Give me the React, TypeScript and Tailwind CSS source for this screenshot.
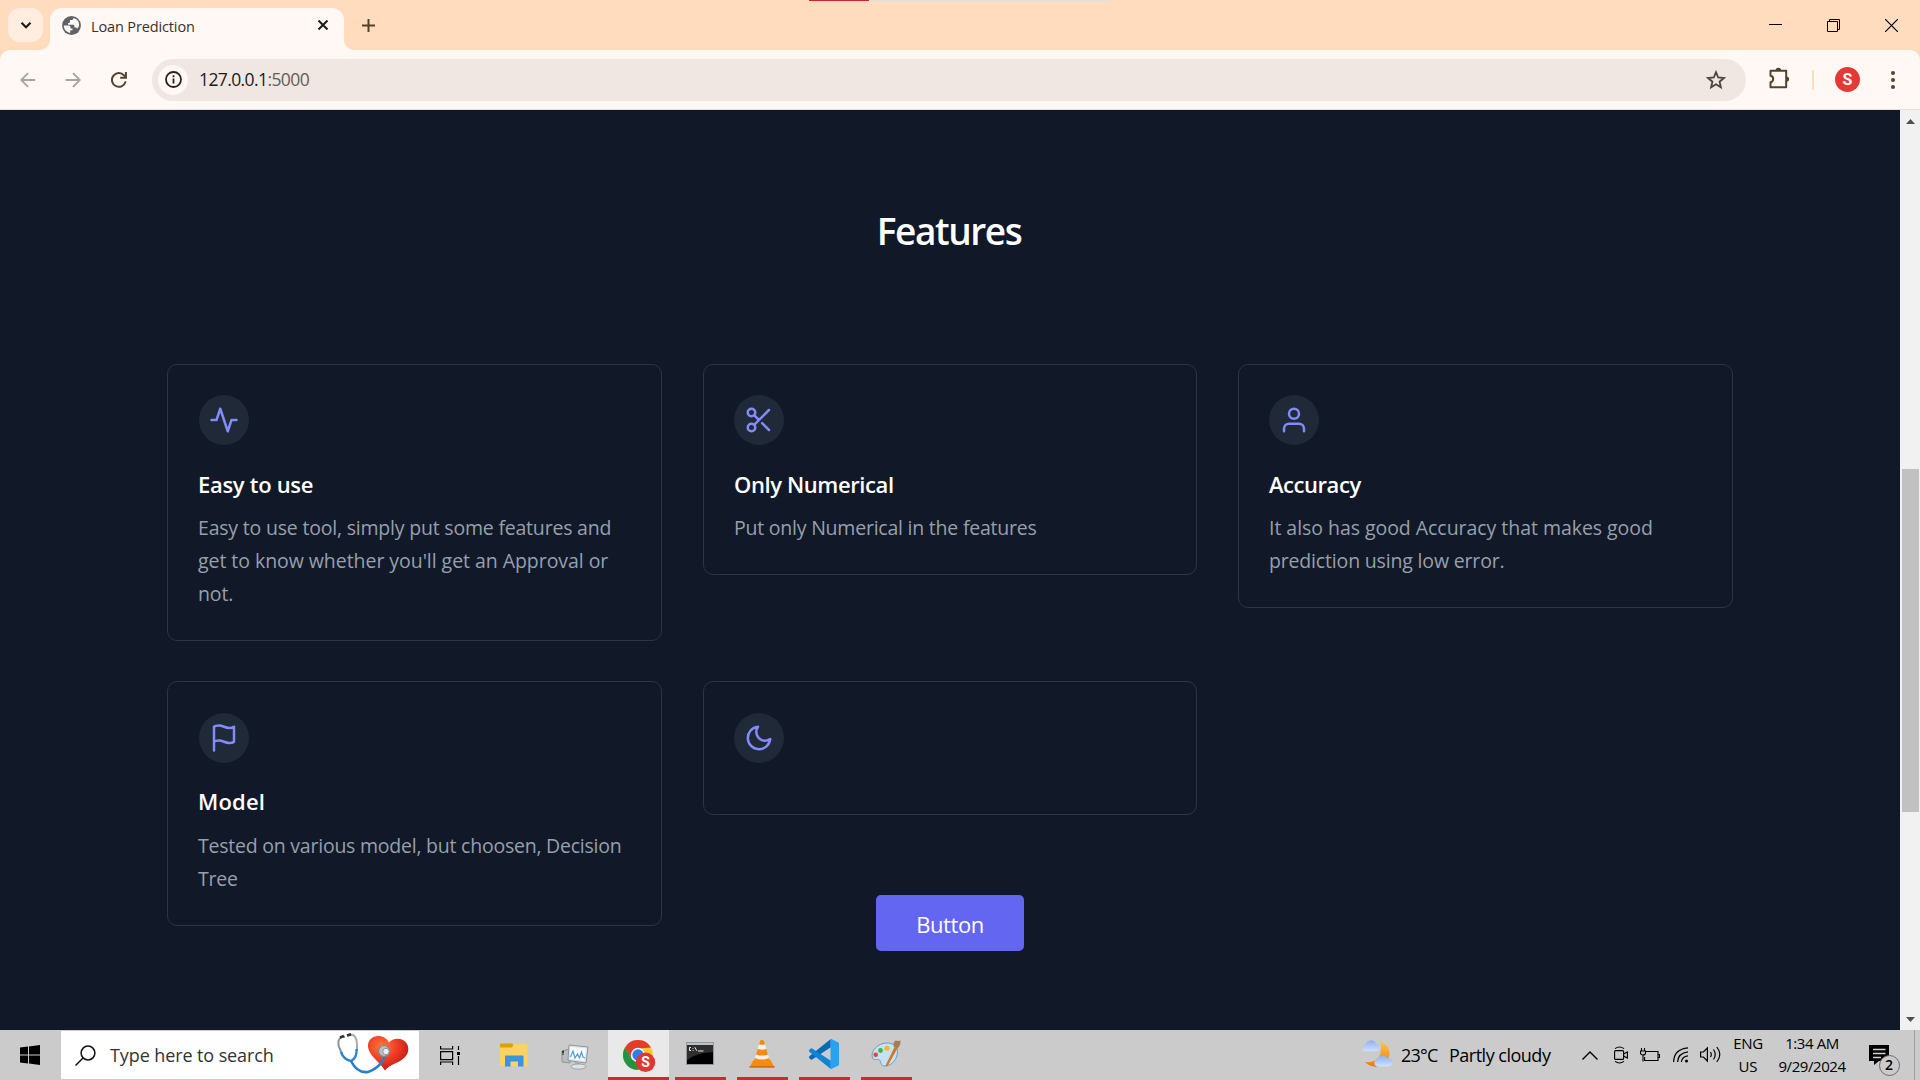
import type { ReactNode } from "react";

type Line = { text: string; tracking: string };
type Feature = {
  icon: ReactNode;
  title?: Line;
  lines?: Line[];
};

const features: Feature[] = [
  {
    icon: <path d="M22 12h-4l-3 9L9 3l-3 9H2" />,
    title: { text: "Easy to use", tracking: "tracking-[-0.3px]" },
    lines: [
      { text: "Easy to use tool, simply put some features and", tracking: "tracking-[-0.201px]" },
      { text: "get to know whether you'll get an Approval or", tracking: "tracking-[-0.05px]" },
      { text: "not.", tracking: "tracking-[-0.1px]" },
    ],
  },
  {
    icon: (
      <>
        <circle cx="6" cy="6" r="3" />
        <circle cx="6" cy="18" r="3" />
        <path d="M20 4L8.12 15.88M14.47 14.48L20 20M8.12 8.12L12 12" />
      </>
    ),
    title: { text: "Only Numerical", tracking: "tracking-[-0.4px]" },
    lines: [{ text: "Put only Numerical in the features", tracking: "tracking-[-0.224px]" }],
  },
  {
    icon: (
      <>
        <path d="M20 21v-2a4 4 0 00-4-4H8a4 4 0 00-4 4v2" />
        <circle cx="12" cy="7" r="4" />
      </>
    ),
    title: { text: "Accuracy", tracking: "tracking-[-0.45px]" },
    lines: [
      { text: "It also has good Accuracy that makes good", tracking: "tracking-[-0.043px]" },
      { text: "prediction using low error.", tracking: "tracking-[-0.168px]" },
    ],
  },
  {
    icon: <path d="M4 15s1-1 4-1 5 2 8 2 4-1 4-1V3s-1 1-4 1-5-2-8-2-4 1-4 1zM4 22v-7" />,
    title: { text: "Model", tracking: "tracking-[0.2px]" },
    lines: [
      { text: "Tested on various model, but choosen, Decision", tracking: "tracking-[-0.23px]" },
      { text: "Tree", tracking: "tracking-[-0.2px]" },
    ],
  },
  { icon: <path d="M21 12.79A9 9 0 1111.21 3 7 7 0 0021 12.79z" /> },
];

function FeatureCard({ feature, index }: { feature: Feature; index: number }) {
  const lowered = index > 2;
  const firstColumn = index % 3 === 0;
  return (
    <div
      className={`rounded-[10px] border border-[#2b3643] ${firstColumn ? "px-[31px]" : "px-[30px]"} ${
        lowered ? "pt-[31px]" : "pt-[30px]"
      } ${feature.title ? "pb-[30px]" : "pb-[51px]"}`}
    >
      <div className="flex size-[50px] items-center justify-center rounded-full bg-[#1f2937]">
        <svg
          className="size-[30px] text-[#818cf8]"
          viewBox="0 0 24 24"
          fill="none"
          stroke="currentColor"
          strokeWidth="2"
          strokeLinecap="round"
          strokeLinejoin="round"
        >
          {feature.icon}
        </svg>
      </div>
      {feature.title && (
        <h2
          className={`text-[22px] leading-8 font-semibold whitespace-nowrap text-white ${feature.title.tracking} ${
            lowered ? "mt-[22px] mb-3" : "mt-[23px] mb-[11px]"
          } ${firstColumn ? "-ml-px" : "ml-0"}`}
        >
          {feature.title.text}
        </h2>
      )}
      {feature.lines && (
        <p
          className={`text-[19.5px] leading-[33px] whitespace-nowrap text-[#96a0ad] ${
            firstColumn ? "-ml-px" : "ml-0"
          }`}
        >
          {feature.lines.map((l) => (
            <span key={l.text} className={`block ${l.tracking}`}>
              {l.text}
            </span>
          ))}
        </p>
      )}
    </div>
  );
}

function TabStrip() {
  return (
    <div className="relative flex h-[50px] bg-[#fedcbd]">
      <div className="absolute top-0 left-[809px] flex h-px w-[301px] bg-[#dfe0e0]">
        <div className="w-[60px] bg-[#d3222f]" />
      </div>
      <div className="mt-2 ml-2 flex h-[34px] w-[35px] items-center justify-center rounded-xl bg-[#ffeddf]">
        <svg className="size-3" viewBox="0 0 12 12" fill="none" stroke="#1f1b16" strokeWidth="2.2">
          <path d="M1.5 3.8L6 8.2l4.500-4.400" />
        </svg>
      </div>
      <svg className="mt-10 -ml-[3px] size-[10px]" viewBox="0 0 10 10">
        <path d="M0 10A10 10 0 0 0 10 0V10z" fill="#fff8f5" />
      </svg>
      <div className="mt-2 flex h-[42px] w-[294px] items-center rounded-t-xl bg-[#fff8f5] pl-3">
        <svg className="mb-[7px] size-[19px]" viewBox="0 0 19 19">
          <circle cx="9.500" cy="9.500" r="9.400" fill="#5f6368" />
          <path
            d="M1.800 9.600h4.700c1.200 0 2 .9 2 2v.8h2v1.800H8.200v2.700c-3.600-.4-6.400-3.300-6.400-7.300zM11.400 2c-.1 1.500-.6 1.900-1.700 1.900H8v1.900c0 .9-.7 1.200-1.900 1.200v1.800h4.700c1 0 1.600.6 1.600 1.600v1h1c1 0 1.500.4 1.800 1.200 1.200-1 1.900-2.300 1.900-4.100 0-3-2.200-5.700-5.700-6.500z"
            fill="#fff8f5"
          />
        </svg>
        <span className="mb-1 ml-[10px] w-[220px] text-[14.5px] leading-5 tracking-[-0.131px] whitespace-nowrap text-[#38312b]">
          Loan Prediction
        </span>
        <svg className="mb-2 ml-[7px] size-[10px]" viewBox="0 0 10 10" stroke="#1f1b16" strokeWidth="2">
          <path d="M.5.5l9 9M9.500.5l-9 9" />
        </svg>
      </div>
      <svg className="mt-10 size-[10px]" viewBox="0 0 10 10">
        <path d="M10 10A10 10 0 0 1 0 0V10z" fill="#fff8f5" />
      </svg>
      <svg className="mt-[19px] ml-2 size-[13px]" viewBox="0 0 13 13" stroke="#54432b" strokeWidth="2">
        <path d="M6.500 0v13M0 6.500h13" />
      </svg>
      <div className="mt-[19px] ml-auto flex pr-[22px]">
        <svg className="h-[13px] w-[13px]" viewBox="0 0 13 13" stroke="#000">
          <path d="M0 5.500h13" />
        </svg>
        <svg className="ml-[45px] size-[13px]" viewBox="0 0 13 13" fill="none" stroke="#000">
          <path d="M.5 2.500h10v10H.5zM2.500 2.500v-2h10v10h-2" />
        </svg>
        <svg className="ml-[45px] size-[13px]" viewBox="0 0 13 13" stroke="#000" strokeWidth="1.200">
          <path d="M0 0l13 13M13 0L0 13" />
        </svg>
      </div>
    </div>
  );
}

function Toolbar() {
  return (
    <div className="bg-[#fedcbd]">
      <div className="flex h-[60px] items-center rounded-t-[10px] border-b border-[#e9ddd6] bg-[#fff8f5]">
        <svg className="ml-[20px] size-4" viewBox="0 0 16 16" fill="none" stroke="#a9a4a0" strokeWidth="1.800">
          <path d="M15.300 8H1.500M8 1.200L1.200 8 8 14.800" />
        </svg>
        <svg className="ml-[29px] size-4" viewBox="0 0 16 16" fill="none" stroke="#a9a4a0" strokeWidth="1.800">
          <path d="M.7 8h13.800M8 1.200L14.800 8 8 14.800" />
        </svg>
        <svg className="ml-[30px] size-4" viewBox="0 0 16 16" fill="none" stroke="#54432b" strokeWidth="2">
          <path d="M14.600 9.400A6.900 6.900 0 1 1 13 3.300l1.500 1.700" />
          <path d="M14.900 0v5.700H9.200" />
        </svg>
        <div className="ml-[25px] flex h-[42px] w-[1594px] items-center rounded-full bg-[#f0e7e2] pl-[6px]">
          <div className="flex size-[30px] items-center justify-center rounded-full bg-[#fff8f5]">
            <svg className="size-[17px]" viewBox="0 0 17 17" fill="none" stroke="#26211c" strokeWidth="1.800">
              <circle cx="8.500" cy="8.500" r="7.500" />
              <path d="M8.500 7.500v5M8.500 4.300v1.900" />
            </svg>
          </div>
          <span className="mb-0.5 ml-[11px] text-[17.5px] leading-6 tracking-[-0.6px] whitespace-nowrap text-[#1f1b16]">
            127.0.0.1<span className="text-[#655d58]">:5000</span>
          </span>
          <svg
            className="mr-5 ml-auto size-5"
            viewBox="0 0 20 20"
            fill="none"
            stroke="#4d443e"
            strokeWidth="1.800"
          >
            <path d="M10 2.200l2.200 5.300 5.700.5-4.300 3.700 1.300 5.600L10 14.300l-4.900 3 1.300-5.600L2.100 8l5.700-.5z" />
          </svg>
        </div>
        <svg className="mb-[3px] ml-[22px] size-[22px]" viewBox="0 0 22 22" fill="none" stroke="#54432b" strokeWidth="2">
          <path d="M2.500 3.800h15.700v16.400H2.500v-5c3.600-.6 3.600-5.800 0-6.400z" strokeLinejoin="round" />
          <path d="M7.600 3.500a2.800 2.800 0 0 1 5.600 0zM18.500 9.500a2.600 2.600 0 0 1 0 5.200z" fill="#54432b" stroke="none" />
        </svg>
        <div className="ml-[22px] h-5 w-[2px] rounded-full bg-[#fedcbd]" />
        <div className="ml-[21px] flex size-[25px] items-center justify-center rounded-full bg-[#e53935] font-['Roboto'] text-[16px] leading-none font-bold text-white">
          S
        </div>
        <svg className="ml-[31px] h-[18px] w-1" viewBox="0 0 4 18" fill="#54432b">
          <circle cx="2" cy="2" r="2" />
          <circle cx="2" cy="9" r="2" />
          <circle cx="2" cy="16" r="2" />
        </svg>
      </div>
    </div>
  );
}

function Scrollbar() {
  return (
    <div className="flex w-5 flex-col items-center bg-[#f1f1f1]">
      <svg className="mt-[9px] h-[5px] w-[9px]" viewBox="0 0 9 5" fill="#505050">
        <path d="M4.500 0L9 5H0z" />
      </svg>
      <div className="mt-[345px] h-[343px] w-[17px] bg-[#c1c1c1]" />
      <svg className="mt-auto mb-[8px] h-[5px] w-[9px]" viewBox="0 0 9 5" fill="#505050">
        <path d="M4.500 5L0 0h9z" />
      </svg>
    </div>
  );
}

function Stethoscope() {
  return (
    <svg className="h-[44px] w-[76px]" viewBox="0 0 76 44" fill="none">
      <defs>
        <radialGradient id="heart" cx=".35" cy=".3" r=".8">
          <stop offset="0" stopColor="#ff7a3c" />
          <stop offset=".5" stopColor="#ee3a24" />
          <stop offset="1" stopColor="#b31217" />
        </radialGradient>
      </defs>
      <path
        d="M49 37.500C44 29 33 23 32 14 31 5 41 0 49 5c2 1 3 3 4 4.500 3-4 9-5 14-2.500 7 4 7 13 1 18-5 5-14 6-19 12.500z"
        fill="url(#heart)"
      />
      <path d="M9 4C4 3 1 7 3 14l3 7" stroke="#8d949b" strokeWidth="2" />
      <path d="M12 2c6-2 9 3 9 9v7" stroke="#a6adb3" strokeWidth="2" />
      <path d="M4 4.500l4-1.500M11 2.500l4-1.200" stroke="#333" strokeWidth="2.800" />
      <path d="M5 19c2 6 5 8 10 9 4-2 6-6 5.500-12" stroke="#2d86cf" strokeWidth="2.400" />
      <path d="M15 28c4 8 10 12 17 11 9-3 17-11 17-19" stroke="#2a7fc6" strokeWidth="2.600" />
      <circle cx="48" cy="18" r="5.500" fill="#b9bfc4" stroke="#7d858b" strokeWidth="1.200" />
      <circle cx="50" cy="18.500" r="3.200" fill="#eef1f3" stroke="#8f979d" />
    </svg>
  );
}

function FolderIcon() {
  return (
    <svg className="h-[24px] w-[28px]" viewBox="0 0 28 24">
      <path d="M0 1.500Q0 .5 1 .5h11l2 2-2 3H0z" fill="#e09f06" />
      <path d="M0 4.500h12l2-3.500h12.500q1 0 1 1v21H0z" fill="#fdd162" />
      <path d="M5 23.500V13.500q0-1 1-1h16.500q1 0 1 1V23.500H18v-5h-7.500v5z" fill="#3a94e0" />
    </svg>
  );
}

function MonitorIcon() {
  return (
    <svg className="h-[26px] w-[28px]" viewBox="0 0 28 26">
      <path d="M1 7l8-2v14l-8-1z" fill="#b9bdc2" stroke="#85898e" strokeWidth=".8" />
      <path d="M1 7l2-.4v4L1 11z" fill="#2d3338" />
      <path d="M1.200 9.500h1.600" stroke="#39d353" strokeWidth="1.400" />
      <path d="M8 1l19 2-2 16-18-2.500z" fill="#dfe3e7" stroke="#8f969d" strokeWidth="1" />
      <path d="M9.500 3l15.500 1.600-1.500 12.200L9 15z" fill="#f7fbff" />
      <path d="M9.500 13l2.500-6 2 7 2.500-4 2 4 2-6 1.500 5 2 1" fill="none" stroke="#4f9fd0" strokeWidth="1.200" />
      <path d="M14 18l5 .7.500 3-5.500-.6z" fill="#aab0b6" />
      <ellipse cx="17.500" cy="22.600" rx="7.500" ry="2.600" fill="#dfe2e5" stroke="#8f969d" strokeWidth=".8" />
    </svg>
  );
}

function ChromeIcon() {
  return (
    <svg className="h-[33px] w-[33px]" viewBox="0 0 33 33">
      <circle cx="15" cy="15" r="15" fill="#fcc934" />
      <path d="M2 7.500A15 15 0 0 1 28 7.500L15 8.500 8.500 18.700z" fill="#e33b2e" />
      <path d="M15 30A15 15 0 0 1 2 7.500l6.500 11.250L15 22.500l6-3z" fill="#229342" />
      <circle cx="15" cy="15" r="7.200" fill="#fff" />
      <circle cx="15" cy="15" r="5.700" fill="#2f7de9" />
      <circle cx="22.500" cy="22.300" r="9.700" fill="#de3835" />
      <text
        x="22.500"
        y="27.300"
        textAnchor="middle"
        fontFamily="Roboto, sans-serif"
        fontSize="14"
        fontWeight="700"
        fill="#fff"
      >
        S
      </text>
    </svg>
  );
}

function TerminalIcon() {
  return (
    <svg className="h-[23px] w-[28px]" viewBox="0 0 28 23">
      <rect x=".5" y=".5" width="27" height="22" fill="#000" stroke="#8f979f" />
      <rect x="1" y="1" width="26" height="2.200" fill="#b9c2cb" />
      <path d="M1 3.200h26v7Q12 10 1 18z" fill="#2f2f2f" />
      <path d="M5 5.500H3.500v3H5M7 6v.8M7 8v.8M8.800 5.200l2 3.600M12 9h5.500" stroke="#e8e8e8" fill="none" />
    </svg>
  );
}

function ConeIcon() {
  return (
    <svg className="h-[29px] w-[26px]" viewBox="0 0 26 29">
      <path d="M4.500 21h17L25.500 28.500H.5z" fill="#f48a10" />
      <path d="M.5 27h25v1.600H.5z" fill="#d86c05" />
      <path d="M11 1.500Q13 0 15 1.500L20.500 20.500Q13 25 5.500 20.500z" fill="#f0f0ee" />
      <path d="M11 1.500Q13 0 15 1.500l1 3.700q-3 1-6 0z" fill="#f38b14" />
      <path d="M8.600 9.800q4.400 1.700 8.800 0l1.600 5.600q-6 2.400-12 0z" fill="#f38b14" />
      <path d="M6 19l-.8 2.800q7.800 4 15.600 0L20 19q-7 3.200-14 0z" fill="#f38b14" />
    </svg>
  );
}

function CodeIcon() {
  return (
    <svg className="h-[30px] w-[30px]" viewBox="0 0 30 30">
      <path d="M.3 17.200L21.800 0v8.300L3.200 20.600q-.8.400-1.500-.2L.3 19.100q-.8-1 0-1.900z" fill="#0a6bb3" />
      <path d="M.3 12.800L21.800 30v-8.300L3.200 9.400q-.8-.4-1.500.2L.3 10.900q-.8 1 0 1.900z" fill="#0c85d3" />
      <path d="M21.500.2q.6-.4 1.300 0L29 3.200q1 .5 1 1.500v20.600q0 1-1 1.500l-6.200 3q-.7.300-1.300-.1z" fill="#28a3f2" />
    </svg>
  );
}

function PaletteIcon() {
  return (
    <svg className="h-[29px] w-[30px]" viewBox="0 0 30 29">
      <path
        d="M1.500 19C-1 12 7 4.500 15 4c7-.3 11.500 3 11.500 8.500 0 8-6 14.500-12.500 14.500-5 0-3.500-4-5.500-6-2-1.500-5.500 1-7-2z"
        fill="#c4e2f3"
        stroke="#6f9dbb"
      />
      <circle cx="4.700" cy="15.800" r="2.300" fill="#e5443b" />
      <circle cx="9.500" cy="11.500" r="2.400" fill="#4caf3d" />
      <circle cx="16" cy="9.200" r="2.500" fill="#f3b61f" />
      <path d="M23.500 8L14.500 26.500l1.800 1L26.500 9.500z" fill="#d37a26" />
      <path d="M23 8Q21.500 3.500 24.500 1.500q3 .8 5 0 .5 4.500-3 8z" fill="#a67c50" />
    </svg>
  );
}

function WeatherIcon() {
  return (
    <svg className="h-[29px] w-[31px]" viewBox="0 0 31 29">
      <defs>
        <linearGradient id="moon" x1="0" y1="0" x2="0" y2="1">
          <stop offset="0" stopColor="#fbc64a" />
          <stop offset="1" stopColor="#f0780f" />
        </linearGradient>
        <linearGradient id="cloud" x1="0" y1="0" x2="0" y2="1">
          <stop offset="0" stopColor="#8fb0f0" />
          <stop offset="1" stopColor="#cfe0fc" />
        </linearGradient>
      </defs>
      <path d="M18 2.500c8 3 11.500 9.500 8.500 16.500C23 28 10 31 3 23c9 1 14-3 15.500-9 1-4 .8-7-.5-11.500z" fill="url(#moon)" />
      <path d="M3.500 12.300a3.400 3.400 0 0 1 0-6.700 5.600 5.600 0 0 1 10.500-1 3.900 3.900 0 0 1 0 7.700z" fill="url(#cloud)" />
      <path d="M15.500 27.500a3.700 3.700 0 0 1 0-7.300 5.400 5.400 0 0 1 10-.8 4 4 0 0 1 1.400 8.100z" fill="url(#cloud)" />
    </svg>
  );
}

function Underlined({ children }: { children: ReactNode }) {
  return (
    <div className="mr-[11px] flex h-[50px] w-[51px] flex-col items-center justify-between">
      <div className="flex h-[49px] items-center pr-[2px]">{children}</div>
      <div className="h-[3px] w-full shrink-0 bg-[#c92b30]" />
    </div>
  );
}

function Taskbar() {
  return (
    <div className="flex h-[50px] items-center bg-[#cbcbcb] text-black">
      <svg className="ml-5 size-5" viewBox="0 0 20 20" fill="#000">
        <path d="M0 2.600L8 1.500v8H0zM9 1.400L20 0v9.500H9zM0 10.500h8v8l-8-1.100zM9 10.500h11V20L9 18.600z" />
      </svg>
      <div className="ml-[21px] flex h-[48px] w-[358px] items-center bg-white">
        <svg className="ml-[14px] size-[21px]" viewBox="0 0 21 21" fill="none" stroke="#111" strokeWidth="1.500">
          <circle cx="13" cy="8" r="6.900" />
          <path d="M8 13L.5 20.500" />
        </svg>
        <span className="ml-[14px] w-[226px] text-[18px] leading-6 tracking-[-0.1px] whitespace-nowrap text-[#333]">
          Type here to search
        </span>
        <Stethoscope />
      </div>
      <svg className="ml-[21px] h-[19px] w-[21px]" viewBox="0 0 21 19" fill="none" stroke="#000" strokeWidth="1.200">
        <path d="M.6 0v3h12V0M.6 5.600h12v8H.6zM.6 19v-3h12v3M18.500 0v4M18.500 10v9" />
        <path d="M17 6h3v3h-3z" fill="#000" stroke="none" />
      </svg>
      <div className="ml-[39px]">
        <FolderIcon />
      </div>
      <div className="mt-1 ml-[33px]">
        <MonitorIcon />
      </div>
      <div className="mr-[6px] ml-[19px] flex h-[50px] w-[61px] flex-col items-center justify-between bg-[#e9e9e9]">
        <div className="mt-[10px] ml-[2px]">
          <ChromeIcon />
        </div>
        <div className="h-[3px] w-full bg-[#c92b30]" />
      </div>
      <Underlined>
        <TerminalIcon />
      </Underlined>
      <Underlined>
        <ConeIcon />
      </Underlined>
      <Underlined>
        <CodeIcon />
      </Underlined>
      <Underlined>
        <PaletteIcon />
      </Underlined>
      <div className="mb-1 ml-auto">
        <WeatherIcon />
      </div>
      <span className="ml-[8px] w-[38px] text-[18px] leading-6 tracking-[-0.764px] whitespace-nowrap">23°C</span>
      <span className="ml-[10px] w-[101px] text-[18px] leading-6 tracking-[-0.5px] whitespace-nowrap">
        Partly cloudy
      </span>
      <svg className="ml-[32px] h-[9px] w-4" viewBox="0 0 16 9" fill="none" stroke="#000" strokeWidth="1.400">
        <path d="M.5 8.500L8 1l7.500 7.500" />
      </svg>
      <svg className="ml-4 h-[18px] w-[14px]" viewBox="0 0 14 18" fill="none" stroke="#000" strokeWidth="1.100">
        <path d="M1 2.600Q5.500-.6 10 2.600M1 15.400Q5.500 18.600 10 15.400" />
        <rect x=".6" y="4.600" width="9" height="8.800" rx="1" />
        <path d="M9.600 8l3.800-2v6L9.600 10" />
      </svg>
      <svg className="mb-px ml-3 h-[14px] w-[20px]" viewBox="0 0 20 14" fill="none" stroke="#000" strokeWidth="1.100">
        <path d="M6 3.500h12v9H4.600V9M18.600 6.500h1v3h-1M1.500 0v3M4.500 0v3M.5 3h5v2q0 2-2.500 2T.5 5zM3 7v6.500" />
      </svg>
      <svg className="ml-[13px] h-[16px] w-[16px]" viewBox="0 0 16 16" fill="none" stroke="#000" strokeWidth="1.200">
        <path d="M.6 15Q1 2 15 .8M4.600 15Q5 6 15 4.800M8.300 15Q9 9.500 15 8.800" />
        <circle cx="13.500" cy="14" r="1.500" fill="#000" stroke="none" />
      </svg>
      <svg className="mb-px ml-[11px] h-[17px] w-[21px]" viewBox="0 0 21 17" fill="none" stroke="#000" strokeWidth="1.200">
        <path d="M.6 6h2.800L7.400 2v13L3.400 11H.6zM10.500 6q1.600 2.500 0 5M13.500 3.500q3.500 5 0 10M16.800 1q6 7.500 0 15" />
      </svg>
      <div className="ml-[12px] flex w-[30px] flex-col items-center pb-px text-[15px] leading-[22.5px] whitespace-nowrap">
        <span className="tracking-[-0.314px]">ENG</span>
        <span>US</span>
      </div>
      <div className="ml-[14px] flex w-[70px] flex-col items-center pb-px text-[15px] leading-[22.5px] whitespace-nowrap">
        <span className="tracking-[-0.425px]">1:34 AM</span>
        <span className="tracking-[-0.433px]">9/29/2024</span>
      </div>
      <div className="relative ml-[22px] h-[20px] w-[20px]">
        <svg className="h-[20px] w-[20px]" viewBox="0 0 20 20">
          <path d="M0 0h20v16H10l-5 4v-4H0z" fill="#000" />
          <path d="M4 4.500h12.500M4 8.500h12.500M4 12.500h8" stroke="#d0d0d0" strokeWidth="1.300" />
        </svg>
        <div className="absolute top-[9.5px] left-[9.5px] flex size-[21px] items-center justify-center rounded-full border border-[#6c6c6c] bg-[#cbcbcb] text-[14px] leading-none font-semibold">
          2
        </div>
      </div>
      <div className="mr-[5px] ml-[25px] h-full w-px bg-[#a0a0a0]" />
    </div>
  );
}

export default function App() {
  return (
    <div className="flex h-[1080px] w-[1920px] flex-col overflow-hidden bg-[#111827] font-['Open_Sans','Noto_Sans',sans-serif]">
      <TabStrip />
      <Toolbar />
      <div className="flex h-[920px]">
        <main className="flex-1 px-[167px]">
          <h1 className="mt-[96px] pr-[2px] text-center text-[37px] leading-[50px] font-semibold tracking-[-1.417px] text-white">
            Features
          </h1>
          <div className="mt-[108px] grid grid-cols-[495px_494px_495px] items-start gap-x-[41px] gap-y-10">
            {features.map((feature, i) => (
              <FeatureCard key={i} feature={feature} index={i} />
            ))}
          </div>
          <button className="relative mx-auto -mt-[31px] block h-14 w-[148px] rounded-[5px] bg-[#6366f1] pt-px text-[22px] leading-8 tracking-[-0.4px] text-white">
            Button
          </button>
        </main>
        <Scrollbar />
      </div>
      <Taskbar />
    </div>
  );
}
